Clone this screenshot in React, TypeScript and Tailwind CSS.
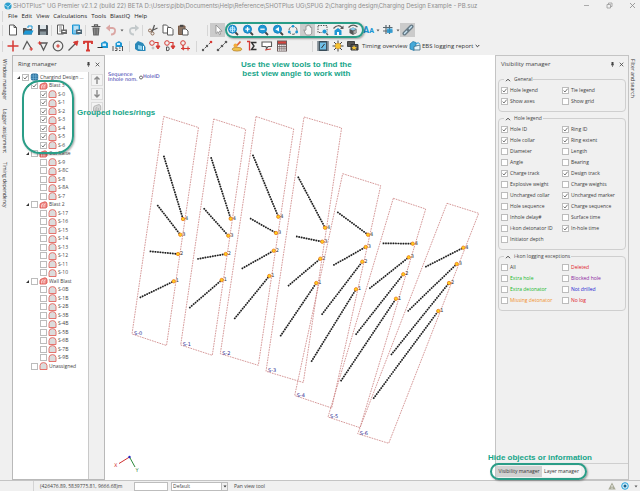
import type { ReactNode } from 'react';

type Point = [number, number];

interface Ring {
  name: string;
  outline: Point[];
  /** toe -> collar, hole 4 first */
  holes: Array<[Point, Point]>;
}

interface TreeNode {
  label: string;
  level: 0 | 1 | 2;
  kind: 'design' | 'blast' | 'ring';
  checked?: boolean;
  open?: boolean;
}

const BLUE = '#1d97d4';
const DARK = '#5a5a5a';
const RED = '#d63a34';

const rings: Ring[] = [
  {
    name: 'S-0',
    outline: [[163.7, 116.5], [198.5, 127.5], [166.5, 345.5], [132, 334]],
    holes: [[[163.7, 155.7], [183, 219]], [[157.3, 205], [180.3, 234.7]], [[149.7, 251.3], [178, 254]], [[139.7, 297.7], [173.7, 281.3]]],
  },
  {
    name: 'S-1',
    outline: [[213.7, 119], [245.7, 129.3], [212.3, 355.3], [180.7, 345]],
    holes: [[[211, 157.3], [230.7, 218.7]], [[203.7, 208.3], [228.3, 235.7]], [[197.3, 259], [225.7, 254]], [[189.3, 308], [221.7, 280]]],
  },
  {
    name: 'S-2',
    outline: [[256, 116.5], [293.7, 129], [258.3, 365.3], [220.3, 353.7]],
    holes: [[[252.7, 154.7], [278.3, 216.7]], [[250, 218.3], [276, 233]], [[241.7, 268.7], [273.7, 250.7]], [[234.3, 319], [269.3, 276]]],
  },
  {
    name: 'S-3',
    outline: [[304, 117], [341.6, 128], [303.3, 382.5], [266, 371.3]],
    holes: [[[298, 176.7], [325, 227.7]], [[296, 236.3], [322.3, 241.7]], [[288, 286], [320.3, 258.7]], [[280.3, 336.3], [316.3, 283]]],
  },
  {
    name: 'S-4',
    outline: [[342.7, 173.7], [380.7, 185.7], [331.7, 408], [294.7, 395.5]],
    holes: [[[337.3, 212], [368, 234.7]], [[333.3, 265.3], [365.7, 247]], [[321.7, 314.7], [362.3, 261.7]], [[311.3, 361.7], [356, 289.3]]],
  },
  {
    name: 'S-5',
    outline: [[393.3, 198.3], [425.7, 209], [360, 427.7], [328, 417]],
    holes: [[[382.7, 243.3], [412.7, 243.7]], [[369.3, 288.7], [408.7, 257.3]], [[355.7, 334.7], [403.3, 274.3]], [[340.7, 381.3], [396, 298.7]]],
  },
  {
    name: 'S-6',
    outline: [[447, 203.3], [478.7, 213.3], [388.7, 443.3], [357.7, 433.7]],
    holes: [[[425.3, 267], [463.3, 247.7]], [[407.7, 311.3], [456.7, 264]], [[391, 355], [449, 283]], [[373.3, 398.7], [438.3, 311]]],
  },
];

const ringNodes = (names: string[], checked = false): TreeNode[] =>
  names.map(label => ({ label, level: 2, kind: 'ring', checked }));

const tree: TreeNode[] = [
  { label: 'Chargind Design ...', level: 0, kind: 'design', checked: true, open: true },
  { label: 'Blast 3', level: 1, kind: 'blast', checked: true, open: true },
  ...ringNodes(['S-0', 'S-1', 'S-2', 'S-3', 'S-4', 'S-5', 'S-6'], true),
  { label: 'Cut Raise', level: 1, kind: 'blast', open: true },
  ...ringNodes(['S-9', 'S-8C', 'S-8', 'S-8A', 'S-7']),
  { label: 'Blast 2', level: 1, kind: 'blast', open: true },
  ...ringNodes(['S-17', 'S-16', 'S-15', 'S-14', 'S-13', 'S-12', 'S-11', 'S-10']),
  { label: 'Wall Blast', level: 1, kind: 'blast', open: true },
  ...ringNodes(['S-0B', 'S-1B', 'S-2B', 'S-3B', 'S-4B', 'S-5B', 'S-6B', 'S-7B', 'S-9B']),
  { label: 'Unassigned', level: 1, kind: 'ring' },
];

interface Option {
  label: string;
  on?: boolean;
  color?: string;
}

const general: Option[] = [
  { label: 'Hole legend', on: true }, { label: 'Tie legend', on: true },
  { label: 'Show axes', on: true }, { label: 'Show grid' },
];

const holeLegend: Option[] = [
  { label: 'Hole ID', on: true }, { label: 'Ring ID', on: true },
  { label: 'Hole collar', on: true }, { label: 'Ring extent', on: true },
  { label: 'Diameter' }, { label: 'Length' },
  { label: 'Angle' }, { label: 'Bearing' },
  { label: 'Charge track', on: true }, { label: 'Design track', on: true },
  { label: 'Explosive weight' }, { label: 'Charge weights' },
  { label: 'Uncharged collar' }, { label: 'Uncharged marker', on: true },
  { label: 'Hole sequence' }, { label: 'Charge sequence', on: true },
  { label: 'Inhole delay#' }, { label: 'Surface time' },
  { label: 'i-kon detonator ID' }, { label: 'In-hole time', on: true },
  { label: 'Initiator depth' },
];

const exceptions: Option[] = [
  { label: 'All' }, { label: 'Deleted', color: 'text-[#e0202c]' },
  { label: 'Extra hole', color: 'text-[#18b82c]' }, { label: 'Blocked hole', color: 'text-[#8a1fa0]' },
  { label: 'Extra detonator', color: 'text-[#18b82c]' }, { label: 'Not drilled', color: 'text-[#2020d0]' },
  { label: 'Missing detonator', color: 'text-[#f0902c]' }, { label: 'No log', color: 'text-[#e0202c]' },
];

function Glyph({ children }: { children: ReactNode }) {
  return (
    <svg viewBox="0 0 12 12" className="size-3 shrink-0" fill="none" stroke={DARK} strokeWidth="1" aria-hidden="true">
      {children}
    </svg>
  );
}

function Tool({ name, active, children }: { name: string; active?: boolean; children: ReactNode }) {
  return (
    <button type="button" aria-label={name}
      className={`flex h-[14px] w-[15px] shrink-0 items-center justify-center ${active ? 'bg-[#cbcbcb]' : ''}`}>
      <Glyph>{children}</Glyph>
    </button>
  );
}

function Grip() {
  return <span className="mx-px h-[11px] w-0.5 shrink-0 border-l border-[#d6d6d6]" />;
}

function Caret({ name }: { name: string }) {
  return (
    <button type="button" aria-label={name} className="flex w-[5px] shrink-0 justify-center">
      <svg viewBox="0 0 4 3" className="h-[3px] w-1" fill={DARK} aria-hidden="true"><path d="M.5.5h3L2 2.5z" /></svg>
    </button>
  );
}

function Lens({ children }: { children?: ReactNode }) {
  return (
    <>
      <path d="M8 8l3 3" stroke="#444" strokeWidth="1.8" />
      <circle cx="5.5" cy="5.2" r="4" fill={BLUE} stroke="#1683c4" />
      {children}
    </>
  );
}

function CheckBox({ on }: { on?: boolean }) {
  return (
    <span className="grid size-[7px] shrink-0">
      <input type="checkbox" defaultChecked={on}
        className="peer col-start-1 row-start-1 size-[7px] appearance-none border border-[#bcbcbc] bg-white" />
      <svg viewBox="0 0 7 7" fill="none" stroke="#555" strokeWidth=".8"
        className="pointer-events-none col-start-1 row-start-1 hidden size-[7px] peer-checked:block" aria-hidden="true">
        <path d="M1.600 3.600L3 5l2.600-3.300" />
      </svg>
    </span>
  );
}

function Check({ label, on, color }: Option) {
  return (
    <label className={`flex h-[11px] items-center gap-0.5 whitespace-nowrap ${color || 'text-[#3c3c3c]'}`}>
      <CheckBox on={on} />
      {label}
    </label>
  );
}

function NodeIcon({ kind }: { kind: TreeNode['kind'] }) {
  return (
    <svg viewBox="0 0 9 8" className="h-2 w-[9px] shrink-0" aria-hidden="true">
      {kind === 'design' && (
        <>
          <rect x=".8" y=".4" width="7.4" height="7.2" rx="2" fill="#2b6f9c" />
          <path d="M1 3h7M1 5.3h7M3.3 1v6M5.8 1v6" stroke="#7fc0e4" strokeWidth=".6" />
        </>
      )}
      {kind === 'blast' && (
        <>
          <path d="M1 7V4q0-2 2.200-2.300L6 .8q2 .2 2 2.200v3L6.500 7z" fill="#ef8f8a" stroke="#d9443e" strokeWidth=".8" />
          <path d="M2.600 6.500V4.200q.3-1.200 1.600-1.200M5 6.500V4.200q.3-1.200 1.600-1.400" stroke="#fff" strokeWidth=".6" fill="none" />
        </>
      )}
      {kind === 'ring' && (
        <path d="M1 7.500V3.500Q1.200.6 4.500.6T8 3.500v4z" fill="#dcdcdc" stroke="#e4655e" strokeWidth=".9" />
      )}
    </svg>
  );
}

function TitleBar() {
  return (
    <header className="flex h-[11px] shrink-0 items-center px-1 font-[Inter,sans-serif] text-[6px] text-[#8d8d8d]">
      <svg viewBox="0 0 8 8" className="mr-px size-2" aria-hidden="true">
        <circle cx="4" cy="4" r="3.600" fill="#2ea0cf" />
        <path d="M1 3l3 2 3-3M4 5v2.500" stroke="#c8ecf8" strokeWidth=".8" fill="none" />
      </svg>
      <h1 className="whitespace-nowrap">
        {'SHOTPlus™ UG Premier v2.1.2 (build 22) BETA D:\\Users\\pjbb\\Documents\\Help\\Reference\\SHOTPlus UG\\SPUG 2\\Charging design\\Charging Design Example - PB.suz'}
      </h1>
      <div className="ml-auto flex items-center gap-4">
        <button type="button" aria-label="Minimize" className="flex">
          <svg viewBox="0 0 7 7" className="size-[7px]" stroke="#999" strokeWidth=".8"><path d="M1 3.500h5" /></svg>
        </button>
        <button type="button" aria-label="Restore" className="flex">
          <svg viewBox="0 0 7 7" className="size-[7px]" fill="none" stroke="#999" strokeWidth=".8"><path d="M1 2.500h3.500V6H1zM2.500 2.500V1H6v3.500H4.500" /></svg>
        </button>
        <button type="button" aria-label="Close" className="flex">
          <svg viewBox="0 0 7 7" className="size-[7px]" stroke="#888" strokeWidth=".8"><path d="M1 1l5 5M6 1L1 6" /></svg>
        </button>
      </div>
    </header>
  );
}

function MenuBar() {
  const items = ['File', 'Edit', 'View', 'Calculations', 'Tools', 'BlastIQ', 'Help'];
  return (
    <nav className="flex h-[11px] shrink-0 items-center pl-px">
      <Grip />
      <div className="ml-[3px] flex gap-1 text-[6px]">
        {items.map(m => <button key={m} type="button" className="text-[#222]">{m}</button>)}
      </div>
    </nav>
  );
}

function MainToolbar() {
  return (
    <div className="flex h-4 shrink-0 items-center pl-px">
      <Grip />
      <Tool name="New"><path d="M2.500 1h4.500l2.500 2.500V11h-7zM7 1v2.500h2.500" fill="#fff" /></Tool>
      <Tool name="Open">
        <path d="M6 4V2h4v3" stroke={BLUE} /><path d="M1 10.500V4h3l1 1h5v5.500z" fill="#555" stroke="none" />
        <path d="M1 10.500l2-4h8.500l-2 4z" fill={BLUE} stroke="none" />
      </Tool>
      <Tool name="Save">
        <path d="M1 1h9.500l.5.800V11H1z" fill="#4c5258" stroke="none" />
        <path d="M3 1h6v4H3z" fill="#dfe6ea" stroke="none" /><path d="M3 7.500h6V11H3z" fill="#88959c" stroke="none" />
      </Tool>
      <Grip />
      <Tool name="Print">
        <path d="M1.500 1h6v9h-6z" fill="#fff" /><path d="M3 3h3M3 5h3M3 7h3" strokeWidth=".7" />
        <rect x="5" y="5.500" width="6" height="4.500" fill="#6b6b6b" stroke="none" /><path d="M6.500 7.500h3" stroke="#fff" />
      </Tool>
      <Tool name="Print preview">
        <path d="M1.500 1h7v9h-7z" fill="#7cc4ea" stroke={BLUE} /><path d="M3 3h4M3 5h4" stroke="#fff" />
        <rect x="5" y="5.500" width="6" height="4.500" fill="#4f6674" stroke="none" /><path d="M6.500 7.500h3" stroke="#fff" />
      </Tool>
      <Grip />
      <Tool name="Delete"><path d="M1.500 2.500h9M4.500 2V.8h3V2" strokeWidth="1.200" /><path d="M2.500 3.500h7l-.7 8H3.200z" fill="#666" stroke="none" /><path d="M4.800 4.500v6M7.200 4.500v6" stroke="#bbb" strokeWidth=".6" /></Tool>
      <Tool name="Undo"><path d="M3 4h4.500q3 .4 2.500 3.500T6 10.500" stroke="#dba7a4" strokeWidth="1.800" /><path d="M5 .5L.8 4 5 7.500z" fill="#dba7a4" stroke="none" /></Tool>
      <span className="flex w-2 justify-center"><Caret name="Undo history" /></span>
      <Tool name="Redo"><path d="M9 4H4.500q-3 .4-2.500 3.500T6 10.500" stroke="#c3c9cb" strokeWidth="1.800" /><path d="M7 .5L11.200 4 7 7.500z" fill="#c3c9cb" stroke="none" /></Tool>
      <Grip />
      <Tool name="Cut">
        <path d="M7.500 1L5 8M10.500 4L4 7" strokeWidth="1.300" /><circle cx="3" cy="6.500" r="1.500" stroke="#8b6b55" />
        <circle cx="5.500" cy="9.500" r="1.500" stroke="#8b6b55" />
      </Tool>
      <Tool name="Copy"><path d="M1 1h3.500L6.500 3v6H1z" fill="#fff" /><path d="M5.500 3.500H9L11 5.500V11H5.500z" fill="#fff" /></Tool>
      <Tool name="Paste"><path d="M1.500 2h6.500v8.500H1.500z" fill="#8a7464" stroke="#7a5c48" /><path d="M3 .8h3.500v2H3z" fill="#444" stroke="none" /><path d="M5.500 5h3.500l2 2v4H5.500z" fill="#fff" /></Tool>
      <span className="w-4 shrink-0" />
      <Grip />
      <Tool name="Select" active><path d="M4 1v8.500L6 7.700l1.500 3 1.200-.6L7.300 7.200H10z" fill="#fff" stroke="#8a8a8a" strokeWidth=".8" /></Tool>
      <div className="relative flex">
        <Tool name="Zoom extents"><Lens><path d="M5.500 2v6.400M2.300 5.200h6.400" stroke="#c7ecff" /><path d="M3.500 3.300h4v4h-4z" stroke="#c7ecff" strokeWidth=".7" /></Lens></Tool>
        <Tool name="Zoom in"><Lens><path d="M5.500 3v4.400M3.300 5.200h4.400" stroke="#fff" strokeWidth="1.300" /></Lens></Tool>
        <Tool name="Zoom out"><Lens><path d="M3.300 5.200h4.400" stroke="#fff" strokeWidth="1.300" /></Lens></Tool>
        <Tool name="Zoom previous"><Lens><path d="M7 3v4.400L3.300 5.200z" fill="#fff" stroke="none" /></Lens></Tool>
        <Tool name="Rotate">
          <circle cx="6" cy="6.300" r="4" strokeDasharray="3 1.200" /><circle cx="6" cy="2.200" r="1.300" fill={BLUE} stroke="none" />
          <circle cx="2.300" cy="8" r="1.400" fill={BLUE} stroke="none" /><circle cx="9.700" cy="8" r="1.400" fill={BLUE} stroke="none" />
        </Tool>
        <Tool name="Pan" active>
          <path d="M3 6.500L1.800 5.800 3.500 10q.5 1 1.500 1h3q1.500-.5 1.700-2V3.500H8.500V2H7v-.8H5.500V2H4v4z" fill="#f6f6f6" stroke="#8c8c8c" strokeWidth=".8" />
        </Tool>
        <Tool name="Zoom window"><path d="M1 1.500h9v7H1z" strokeDasharray="1.500 1" /><path d="M9 9l2 2" strokeWidth="1.500" /><circle cx="7.500" cy="7.500" r="2.300" fill={BLUE} stroke="#fff" strokeWidth=".5" /></Tool>
        <Tool name="Home view">
          <path d="M1.500 4.500Q6-.8 10.500 4" strokeWidth="1.200" /><path d="M11.500 1.500v3.500H8z" fill={DARK} stroke="none" />
          <path d="M2.500 11V6.500L6 4l3.500 2.500V11z" fill={BLUE} stroke="none" /><path d="M5 11V8h2v3" fill="#fff" stroke="none" />
        </Tool>
        <Tool name="Orbit">
          <path d="M1.500 3.500Q6-.8 10.500 3" strokeWidth="1.200" /><path d="M6 3.500l3.500 1.500v4L6 11 2.500 9V5z" fill="#555" stroke="none" />
          <path d="M6 3.500l3.500 1.500L6 6.500 2.500 5z" fill="#8bcbea" stroke="none" /><path d="M6.500 7l2.500-1v3L6.500 10z" fill="#aaa" stroke="none" />
        </Tool>
        <span className="pointer-events-none absolute -top-px -right-1 -bottom-px left-0 rounded-full border-2 border-[#2a9d87] shadow-[1px_1px_2px_#0005]" />
      </div>
      <button type="button" aria-label="Text size" className="w-[15px] pl-[3px] text-left font-[Roboto,sans-serif] text-[7px] leading-none font-black text-[#1d97d4]">
        <span className="text-[9px]">A</span>A
      </button>
      <Caret name="Text size options" />
      <Tool name="Grid"><path d="M4 1v9M7.500 1v9M1 3.500h9.500M1 7h9.500" strokeWidth="1.200" stroke="#5a6870" /><path d="M5 4.500h5.500V9H5z" fill={BLUE} fillOpacity=".8" stroke="none" /></Tool>
      <Caret name="Grid options" />
      <Tool name="Link" active>
        <path d="M2.500 9.500l7-7" stroke="#667985" strokeWidth="4" strokeLinecap="round" /><path d="M2.500 9.500l2.200-2.200M7.300 4.700l2.200-2.200" stroke="#c6e2f2" strokeWidth="1.400" strokeLinecap="round" />
      </Tool>
    </div>
  );
}

function DesignToolbar() {
  return (
    <div className="flex h-4 shrink-0 items-center pl-px">
      <Grip />
      <Tool name="Add point"><path d="M6 .5v11M.5 6h11" stroke={RED} strokeWidth="1.500" /></Tool>
      <Tool name="Polyline"><path d="M1 9.500L5 1.500l4 6.500" strokeWidth="1.300" /><path d="M7.500 9h3.500M9.200 7.200v3.600" stroke={RED} strokeWidth="1.200" /></Tool>
      <Tool name="Polygon"><path d="M3 3h7L6.500 10z" strokeWidth="1.300" /><path d="M.8 3h3.600M2.600 1.200v3.600" stroke={RED} strokeWidth="1.100" /></Tool>
      <Tool name="Circle"><circle cx="6" cy="6" r="4.800" strokeWidth="1.200" /><path d="M4.200 6h3.600M6 4.200v3.600" stroke={RED} strokeWidth="1.200" /></Tool>
      <Tool name="Line"><path d="M1.500 10.500L9 3" strokeWidth="1.300" /><path d="M11 1L6.500 2.200l3.300 3.300z" fill={RED} stroke={RED} /></Tool>
      <Tool name="Text"><path d="M1.500 1.800h9M2 1v3M10 1v3M6 1.500v9M4 10.500h4" stroke={RED} strokeWidth="1.900" /></Tool>
      <Tool name="Tag"><path d="M4 7V3l4-2 3 2v5H4z" fill={BLUE} stroke="none" /><rect x="5.500" y="3.500" width="3.500" height="2.500" fill="#d4effc" stroke="none" /><path d="M.5 7.500h5" stroke="#333" /></Tool>
      <Tool name="Renumber"><path d="M3.500 6V3l3.500-2 3 2v4H3.500z" fill={BLUE} stroke="none" /><rect x="5" y="3" width="3" height="2" fill="#d4effc" stroke="none" /><path d="M1 6v5M3 8h2v2.500H3M7 8h1.500M7 10.500h1.500M10.500 6v5" stroke="#444" strokeWidth=".9" /></Tool>
      <span className="w-[3px]" />
      <Grip />
      <Tool name="Charge"><path d="M1 9V4l3-3 5 2 2.500 4v4H4z" fill="#2b88b8" stroke="none" /><path d="M4 9V5l4 1v4z" fill="#8fd3f0" stroke="none" /><path d="M9.500 6v4" stroke="#fff" /></Tool>
      <Tool name="Surface delay"><circle cx="3" cy="3" r="2.300" stroke={RED} /><path d="M6 2.500h3v4" stroke={RED} strokeWidth="1.200" /><path d="M7 6l2 3 2-3z" fill={RED} stroke={RED} /><circle cx="4" cy="8" r="1" stroke="#999" strokeWidth=".6" /></Tool>
      <Tool name="Inhole delay"><circle cx="3" cy="3" r="2.300" stroke={RED} /><path d="M6 2.500h3v4" stroke={RED} strokeWidth="1.200" /><path d="M7 6l2 3 2-3z" fill={RED} stroke={RED} /><path d="M2.500 7h1.500q1.200 0 1.200 1.800t-1.200 1.800H2.500z" stroke="#444" strokeWidth=".9" /></Tool>
      <Tool name="Tie"><circle cx="4" cy="3" r="2.300" stroke={RED} /><path d="M4 5v3M2 8.500h9M9 6.500v4M5 6.800l-2 1.700 2 1.700" stroke={RED} strokeWidth="1.100" /></Tool>
      <span className="w-[3px]" />
      <Grip />
      <Tool name="Connect"><path d="M1.500 10.500l8.500-8.500" strokeDasharray="2 1" /><circle cx="2" cy="10" r="1.200" fill={DARK} stroke="none" /><circle cx="6" cy="6" r="1.200" fill={DARK} stroke="none" /><circle cx="10" cy="2" r="1.300" fill={RED} stroke="none" /></Tool>
      <Tool name="Connect rings"><path d="M1.500 10.500l8.500-8.500" strokeWidth=".8" /><circle cx="2" cy="10" r="1.300" fill={DARK} stroke="none" /><circle cx="6" cy="6" r="1.300" fill={DARK} stroke="none" /><circle cx="10" cy="2" r="1.300" fill={DARK} stroke="none" /></Tool>
      <Tool name="Detonate"><path d="M9.500 1.500L4.500 7" stroke="#e0603a" strokeWidth="1.800" /><ellipse cx="6" cy="9.200" rx="4.800" ry="1.900" fill="#f0c34c" stroke="#b07a2c" strokeWidth=".7" /><circle cx="4.500" cy="5.500" r="2" fill="#f2ac3c" stroke="none" /></Tool>
      <Tool name="Totals"><path d="M1 1.500h2.500v9" stroke={RED} strokeWidth="1.300" /><path d="M10.500 2.500H5.500L8 6l-2.500 3.500h5" strokeWidth="1.400" stroke="#333" /></Tool>
      <Tool name="Comment"><path d="M1 2h9.500v4.500H7l-1.500 2.500L5 6.500H1z" fill="#fff" strokeWidth="1.100" /><path d="M4 10l6-1" stroke={RED} /></Tool>
      <Tool name="Calculator"><rect x="1" y=".5" width="10" height="11" fill="#6b5a5a" stroke="none" /><path d="M2 1.500h8v2H2z" fill="#d9433c" stroke="none" /><path d="M2 5.500h8M2 7.800h8M2 10h8" stroke="#fff" strokeWidth="1.300" strokeDasharray="1.500 .6" /></Tool>
      <span className="w-[22px] shrink-0" />
      <Grip />
      <Tool name="Playback"><rect x=".5" y="1" width="11" height="10" fill="#384b58" stroke="none" /><path d="M3 2.500h6v7H3z" fill="#6fbfe6" stroke="none" /><path d="M1.600 1.500v9M10.400 1.500v9" stroke="#fff" strokeWidth=".8" strokeDasharray="1 1" /><path d="M4.500 8l3-4" stroke="#333" /></Tool>
      <Tool name="Burst"><path d="M6 .5v11M.5 6h11M2 2l8 8M10 2l-8 8" stroke="#454545" /><circle cx="6" cy="6" r="2.800" fill="#f6c432" stroke="#d08e1c" strokeWidth=".6" /></Tool>
      <Tool name="Snapshots"><path d="M.5 1.500h7v5h-7z" fill="#555" stroke="#444" /><path d="M4 4.500h7v5.500H4z" fill="#555" stroke="#333" /><path d="M7 5l.9 2H10L8.500 8.200 9 10 7 9l-1.700 1 .5-1.800L4.500 7h1.800z" fill="#f6c432" stroke="none" /></Tool>
      <button type="button" className="ml-0.5 w-[45px] shrink-0 text-left text-[6px] whitespace-nowrap">Timing overview</button>
      <Tool name="EBS report"><path d="M1 9V4l3-2.500 3 1V8l-2 2.500z" fill="#45a9d9" stroke="#2477a4" strokeWidth=".7" /><path d="M5 6.500l6-1.500v5H5z" fill="#e9f6fc" stroke="#3b6b84" strokeWidth=".8" /><path d="M7 3.500q3-2 4 1" stroke={BLUE} /></Tool>
      <button type="button" className="flex shrink-0 items-center gap-0.5 text-[6px] whitespace-nowrap">
        EBS logging report
        <svg viewBox="0 0 5 4" className="h-1 w-[5px]" fill="none" stroke="#333" aria-hidden="true"><path d="M.7 1l1.800 1.800L4.300 1" /></svg>
      </button>
    </div>
  );
}

function PanelHeader({ title }: { title: string }) {
  return (
    <div className="flex h-4 shrink-0 items-center pr-1 pl-[5px] text-[6px] text-[#444]">
      <h2>{title}</h2>
      <button type="button" aria-label={`Pin ${title}`} className="ml-auto flex">
        <svg viewBox="0 0 5 6" className="h-[6px] w-[5px]" fill="#444"><path d="M1.500 1h2v2.500h.5v.7H2.800V6h-.6V4.200H1v-.7h.5z" /></svg>
      </button>
      <button type="button" aria-label={`Close ${title}`} className="ml-1 flex">
        <svg viewBox="0 0 5 5" className="size-[5px]" stroke="#444" strokeWidth=".8"><path d="M.7.7l3.600 3.600M4.300.7L.7 4.300" /></svg>
      </button>
    </div>
  );
}

function RingManager() {
  const indent = ['pl-0.5', 'pl-[11px]', 'pl-5'];
  return (
    <section className="flex w-[93px] shrink-0 flex-col border border-[#b9b9b9]">
      <PanelHeader title="Ring manager" />
      <div className="relative flex flex-1">
        <ul className="w-[76px] shrink-0 border-r border-[#c9c9c9] bg-white pt-px">
          {tree.map(n => (
            <li key={n.label} className={`flex items-center odd:h-2 even:h-[9px] ${indent[n.level]}`}>
              <button type="button" aria-label={`Toggle ${n.label}`} disabled={!n.open} className="flex w-[7px] shrink-0 justify-center">
                {n.open && <svg viewBox="0 0 3 3" className="size-[3px]" fill="#333"><path d="M3 0v3H0z" /></svg>}
              </button>
              <label className="flex items-center gap-px whitespace-nowrap text-[#444]">
                <CheckBox on={n.checked} />
                <NodeIcon kind={n.kind} />
                {n.label}
              </label>
            </li>
          ))}
        </ul>
        <div className="flex flex-1 flex-col items-center gap-0.5 pt-0.5">
          <button type="button" aria-label="Move up" className="border border-[#dcdcdc] bg-[#f4f4f4]">
            <svg viewBox="0 0 10 10" className="size-[10px]" fill="none" stroke="#8a8a8a" strokeWidth="1.400"><path d="M5 9V2M2.500 4.500L5 2l2.500 2.500" /></svg>
          </button>
          <button type="button" aria-label="Move down" className="border border-[#dcdcdc] bg-[#f4f4f4]">
            <svg viewBox="0 0 10 10" className="size-[10px]" fill="none" stroke="#8a8a8a" strokeWidth="1.400"><path d="M5 1v7M2.500 5.500L5 8l2.500-2.500" /></svg>
          </button>
          <button type="button" aria-label="Group rings" className="border border-[#dcdcdc] bg-[#f4f4f4]">
            <svg viewBox="0 0 10 10" className="size-[10px]" fill="#d6d6d6" stroke="#aaa" strokeWidth=".8"><path d="M1.500 8V5q0-2 2-2.300L7 1.500q1.800.5 1.700 2.500v3L7 8zM4 8V5.500q.2-1 1.200-1.200M6.300 7.500V5" /></svg>
          </button>
        </div>
        <span className="pointer-events-none absolute top-2 left-[9px] h-[74px] w-[52px] rounded-[18px] border-2 border-[#2a9d87] shadow-[1px_1px_2px_#0005]" />
        <p className="absolute top-9 left-16 z-10 font-['Liberation_Sans',Arial,sans-serif] text-[8px] leading-[9px] font-bold whitespace-nowrap text-[#17a589]">
          Grouped holes/rings
        </p>
      </div>
    </section>
  );
}

function Viewport() {
  return (
    <main className="relative min-w-0 flex-1 overflow-hidden bg-white">
      <svg viewBox="105 55 390 425" className="h-[425px] w-[390px]" fontFamily="'DejaVu Sans', Verdana, sans-serif" fontSize="5">
        <g fill="#2a2aa8">
          <text x="108" y="75.500">Sequence</text>
          <text x="108" y="81">Inhole nom.</text>
          <text x="143" y="78">HoleID</text>
        </g>
        <circle cx="141" cy="77.500" r="1.500" fill="none" stroke="#333" strokeWidth=".7" />
        {rings.map(r => (
          <g key={r.name}>
            <polygon points={r.outline.map(p => p.join(',')).join(' ')} fill="none" stroke="#cc8080" strokeWidth=".8" strokeDasharray="1.700 .9" />
            {r.holes.map(([toe, collar], i) => (
              <g key={i}>
                <line x1={toe[0]} y1={toe[1]} x2={collar[0]} y2={collar[1]} stroke="#999" strokeWidth=".8" />
                <line x1={toe[0]} y1={toe[1]} x2={collar[0]} y2={collar[1]} stroke="#1c1c1c" strokeWidth="1.700" strokeDasharray="1.500 1" />
                <circle cx={collar[0]} cy={collar[1]} r="1.700" fill="#ffd21c" stroke="#ec7a20" strokeWidth=".8" />
                <text x={collar[0] + 2} y={collar[1] + 1} fill="#333">{4 - i}</text>
              </g>
            ))}
            <text x={r.outline[3][0] + 2} y={r.outline[3][1] + 1} fill="#2a2a90">{r.name}</text>
          </g>
        ))}
        <g fill="none" strokeWidth="1">
          <path d="M129.500 457L119 463.500" stroke="#d03030" />
          <path d="M129.500 457l5.500 10" stroke="#2c8a3c" />
        </g>
        <circle cx="129.500" cy="457" r="1.200" fill="#2424c8" />
        <text x="114" y="467" fill="#d03030">X</text>
        <text x="135.500" y="472" fill="#2c8a3c">Y</text>
      </svg>
      <p className="absolute top-[5px] left-[136px] text-center font-['Liberation_Sans',Arial,sans-serif] text-[8px] leading-[9px] font-bold whitespace-nowrap text-[#17a589]">
        Use the view tools to find the<br />best view angle to work with
      </p>
    </main>
  );
}

function OptionGroup({ title, options }: { title: string; options: Option[] }) {
  return (
    <fieldset className="mx-0.5 rounded-sm border border-[#cfcfcf] px-0.5 pb-1">
      <legend className="ml-[3px] px-px leading-[7px]">
        <button type="button" className="flex items-center gap-[3px] text-[#444]">
          <svg viewBox="0 0 6 4" className="h-1 w-[6px]" fill="none" stroke="#444" aria-hidden="true"><path d="M1 3.200l2-2 2 2" /></svg>
          {title}
        </button>
      </legend>
      <div className="grid grid-cols-2 pt-0.5">
        {options.map(o => <Check key={o.label} {...o} />)}
      </div>
    </fieldset>
  );
}

function VisibilityManager() {
  return (
    <section className="flex w-[134px] shrink-0 flex-col border border-[#c4c4c4]">
      <PanelHeader title="Visibility manager" />
      <div className="flex flex-1 flex-col gap-[3px] pt-1">
        <OptionGroup title="General" options={general} />
        <OptionGroup title="Hole legend" options={holeLegend} />
        <OptionGroup title="i-kon logging exceptions" options={exceptions} />
      </div>
      <p className="relative z-10 -ml-2 font-['Liberation_Sans',Arial,sans-serif] text-[8px] leading-[10px] font-bold whitespace-nowrap text-[#17a589]">
        Hide objects or information
      </p>
      <div className="flex h-4 shrink-0 items-center border-t border-[#cfcfcf]">
        <div role="tablist" className="relative flex">
          <button type="button" role="tab" aria-selected="true" className="h-[11px] w-[46px] bg-[#d2d2d2] text-[#333]">Visibility manager</button>
          <button type="button" role="tab" aria-selected="false" className="h-[11px] w-[39px] bg-[#f8f8f8] text-[#333]">Layer manager</button>
          <span className="pointer-events-none absolute -inset-x-[6px] -inset-y-[3px] rounded-full border-2 border-[#2a9d87] shadow-[1px_1px_2px_#0005]" />
        </div>
      </div>
    </section>
  );
}

function StatusBar() {
  return (
    <footer className="flex h-[11px] shrink-0 items-center border-t border-[#c4c4c4] pr-0.5 text-[#444]">
      <span className="mr-[6px] h-full w-[34px] border-r border-[#d4d4d4]" />
      <span className="w-[94px] whitespace-nowrap">(426476.89, 5839775.81, 9666.68)m</span>
      <input type="text" aria-label="Coordinate" className="h-[9px] w-[34px] border border-[#bdbdbd] bg-white" />
      <span className="relative ml-[3px] flex items-center">
        <select aria-label="View preset" className="h-[9px] w-[57px] appearance-none border border-[#bdbdbd] bg-white pl-px leading-[7px]">
          <option>Default</option>
        </select>
        <span className="pointer-events-none absolute right-0 flex h-[9px] w-[7px] items-center justify-center border border-[#bdbdbd] bg-[#f0f0f0]">
          <svg viewBox="0 0 4 3" className="h-[3px] w-1" fill="#333"><path d="M.5.5h3L2 2.500z" /></svg>
        </span>
      </span>
      <span className="ml-[6px]">Pan view tool</span>
      <svg viewBox="0 0 8 8" className="ml-auto size-2" aria-hidden="true">
        <path d="M4 .5l3.700 7H.3z" fill="#a9ab98" /><path d="M4 3v2.500M4 6v.8" stroke="#fff" strokeWidth=".8" />
      </svg>
      <svg viewBox="0 0 8 8" className="ml-[5px] size-2" aria-hidden="true">
        <circle cx="4" cy="4" r="3.300" fill="#d6f0fc" stroke="#27a3dc" /><circle cx="4" cy="4" r="1.500" fill="#1b5f88" />
      </svg>
      <span className="ml-1"><Caret name="Connection options" /></span>
    </footer>
  );
}

export default function App() {
  return (
    <div className="flex h-screen flex-col overflow-hidden bg-[#f0f0f0] font-['Open_Sans','Noto_Sans',sans-serif] text-[5px] leading-[7px] text-[#333]">
      <TitleBar />
      <MenuBar />
      <MainToolbar />
      <DesignToolbar />
      <div className="mt-px flex min-h-0 flex-1">
        <nav className="flex w-3 shrink-0 flex-col items-start gap-[9px] pt-1 pl-px">
          {['Window manager', 'Logger assignment', 'Timing dependency'].map(t => (
            <button key={t} type="button" className="whitespace-nowrap [writing-mode:vertical-rl]">{t}</button>
          ))}
        </nav>
        <RingManager />
        <Viewport />
        <VisibilityManager />
        <nav className="w-[11px] shrink-0 pt-1">
          <button type="button" className="whitespace-nowrap [writing-mode:vertical-rl]">Filter and search</button>
        </nav>
      </div>
      <StatusBar />
    </div>
  );
}
